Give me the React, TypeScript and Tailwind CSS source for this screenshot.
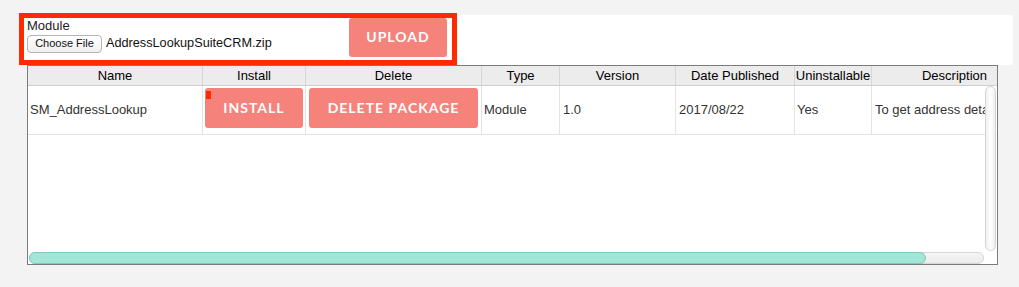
import React from "react";

const cols = [
  { h: "Name", w: "w-[175px]" },
  { h: "Install", w: "w-[103px]" },
  { h: "Delete", w: "w-[176px]" },
  { h: "Type", w: "w-[78px]" },
  { h: "Version", w: "w-[116px]" },
  { h: "Date Published", w: "w-[119px]" },
  { h: "Uninstallable", w: "w-[77px]" },
  { h: "Description", w: "w-[166px]" },
];

const btn =
  "relative flex items-center justify-center rounded-[3px] bg-[#f5827b] text-white font-bold text-[14px] tracking-[1px] [font-family:Lato,'Liberation_Sans',sans-serif]";

export default function App() {
  return (
    <div className="relative w-[1019px] h-[287px] overflow-hidden bg-[#f3f3f3] [font-family:'Liberation_Sans',Arial,sans-serif]">
      {/* upload panel */}
      <div className="ml-[20px] mt-[15px] w-[993px] h-[50px] bg-white flex">
        <div className="w-[329px] pl-[7px] pt-[3px] flex flex-col">
          <div className="text-[13px] leading-[15px] text-[#222]">Module</div>
          <div className="mt-[1px] flex items-center">
            <div className="h-[18px] w-[75px] rounded-[4px] border border-[#b5b5b5] bg-gradient-to-b from-white to-[#f0f0f0] flex items-center justify-center text-[11px] text-[#111]">
              Choose File
            </div>
            <span className="ml-[4px] text-[12.7px] text-[#111]">AddressLookupSuiteCRM.zip</span>
          </div>
        </div>
        <div className={btn + " mt-[3px] w-[98px] h-[39px] pb-[2px]"}>UPLOAD</div>
      </div>

      {/* table */}
      <div className="relative ml-[27px] w-[971px] h-[200px] border border-[#7c7c7c] bg-white overflow-hidden">
        <div className="flex h-[20px] bg-[#ececec] border-b border-[#cfcfcf]">
          {cols.map((c) => (
            <div
              key={c.h}
              className={c.w + " shrink-0 border-r border-[#d6d6d6] text-center text-[13px] leading-[19px] text-black whitespace-nowrap"}
            >
              {c.h}
            </div>
          ))}
        </div>
        <div className="flex h-[49px] border-b border-[#e3e3e3] text-[13px] text-[#333]">
          <div className="w-[175px] shrink-0 border-r border-[#e3e3e3] flex items-center pl-[2px]">SM_AddressLookup</div>
          <div className="w-[103px] shrink-0 border-r border-[#e3e3e3] pl-[2px] pt-[2px]">
            <div className={btn + " w-[98px] h-[40px] pb-[2px]"}>
              <span className="absolute left-[1px] top-[3px] w-[5px] h-[8px] bg-[#ff2a00]" />
              INSTALL
            </div>
          </div>
          <div className="w-[176px] shrink-0 border-r border-[#e3e3e3] pl-[3px] pt-[2px]">
            <div className={btn + " w-[169px] h-[40px] pb-[2px]"}>DELETE PACKAGE</div>
          </div>
          <div className="w-[78px] shrink-0 border-r border-[#e3e3e3] flex items-center pl-[2px]">Module</div>
          <div className="w-[116px] shrink-0 border-r border-[#e3e3e3] flex items-center pl-[3px]">1.0</div>
          <div className="w-[119px] shrink-0 border-r border-[#e3e3e3] flex items-center pl-[3px]">2017/08/22</div>
          <div className="w-[77px] shrink-0 border-r border-[#e3e3e3] flex items-center pl-[2px]">Yes</div>
          <div className="w-[166px] shrink-0 flex items-center pl-[3px]">
            <div className="w-[110px] overflow-hidden whitespace-nowrap">To get address details</div>
          </div>
        </div>

        {/* vertical scrollbar */}
        <div className="absolute left-[957px] top-[20px] w-[11px] h-[165px] rounded-full border border-[#d4d4d4] bg-gradient-to-r from-[#f0f0f0] via-white to-[#eeeeee]" />
        {/* horizontal scrollbar */}
        <div className="absolute left-[1px] top-[186px] w-[955px] h-[12px] rounded-full border border-[#d6d6d6] bg-gradient-to-b from-[#f6f6f6] to-[#ececec]">
          <div className="absolute -left-[1px] -top-[1px] w-[897px] h-[12px] rounded-full border border-[#82c9bb] bg-[#a0e7d8]" />
        </div>
      </div>

      {/* annotation box */}
      <div className="absolute left-[19px] top-[13px] w-[438px] h-[52px] border-[5px] border-[#ff2a00]" />
    </div>
  );
}
